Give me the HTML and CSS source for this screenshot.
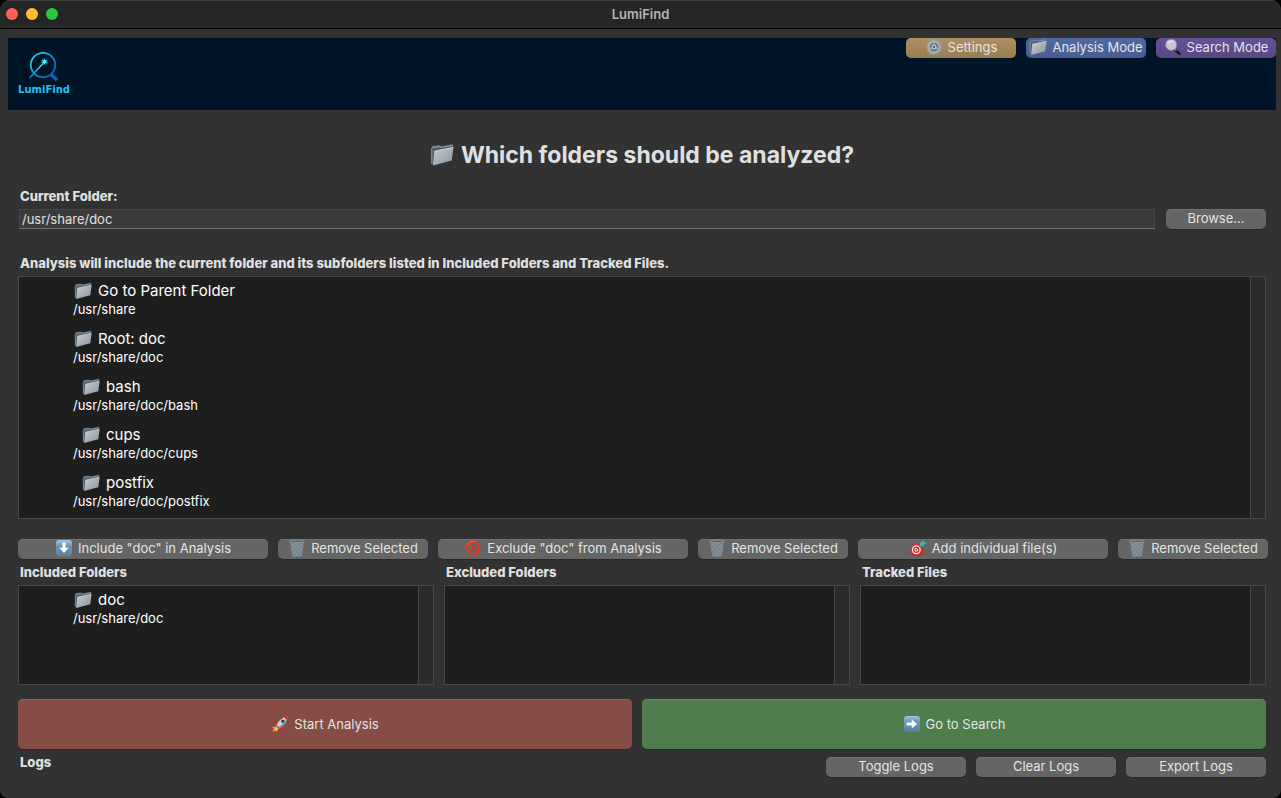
FILE: index.html
```html
<!DOCTYPE html>
<html lang="en">
<head>
<meta charset="utf-8">
<meta name="viewport" content="width=device-width, initial-scale=1">
<title>LumiFind</title>
<link rel="stylesheet" href="styles.css">
</head>
<body>
<svg class="sprite" aria-hidden="true">
  <defs>
    <linearGradient id="silver" x1="0" y1="0" x2="1" y2="1"><stop offset="0" stop-color="#c9ced3"/><stop offset="1" stop-color="#8a9299"/></linearGradient>
    <linearGradient id="tile" x1="0" y1="0" x2="0" y2="1"><stop offset="0" stop-color="#a4c6e0"/><stop offset=".35" stop-color="#7196b8"/><stop offset="1" stop-color="#5b7fa3"/></linearGradient>
    <linearGradient id="ring" x1="0" y1="0" x2="1" y2="1"><stop offset="0.1" stop-color="#14d8f4"/><stop offset="0.55" stop-color="#0b86cc"/><stop offset="1" stop-color="#0559b4"/></linearGradient>
    <linearGradient id="wand" x1="0" y1="1" x2="1" y2="0"><stop offset="0" stop-color="#0a6cc0"/><stop offset="1" stop-color="#3ff0ff"/></linearGradient>
  </defs>
  <symbol id="folder" viewBox="0 0 18 18">
    <path d="M1 3.500 2 2l5-.6 1.200 1L16.800.8l.6 1.200L16.300 12 2 16.500 1 15.500z" fill="#4c5f6c"/>
    <path d="M1.500 3.300 7.500 2.600l1 .6 8.500-1.500" fill="none" stroke="#8fa3b0" stroke-width=".8"/>
    <path d="M1.300 4v11.500" stroke="#8796a0" stroke-width=".8"/>
    <path d="M3.200 6.200 17.600 3.200 16.300 13.200 2.200 16.900z" fill="url(#silver)"/>
    <path d="M3.200 6.200 17.600 3.200" stroke="#dce2e6" stroke-width=".6" fill="none"/>
  </symbol>
  <symbol id="gear" viewBox="0 0 18 18">
    <circle cx="9" cy="9" r="7.400" fill="none" stroke="#93a1ab" stroke-width="2" stroke-dasharray="1.500 1.400"/>
    <circle cx="9" cy="9" r="5.500" fill="none" stroke="#a5b1b9" stroke-width="2.400"/>
    <circle cx="9" cy="9" r="4.200" fill="#64727c"/>
    <path d="M9 9V4.800M9 9l4 1.800M9 9l-4 1.800" stroke="#a9b5bd" stroke-width="1.100"/>
    <circle cx="9" cy="9" r="2.500" fill="#bac4ca"/><circle cx="9" cy="9" r="1.200" fill="#53616c"/>
  </symbol>
  <symbol id="lens" viewBox="0 0 18 18">
    <path d="m11 11.500 4.500 4.300" stroke="#151515" stroke-width="2.500" stroke-linecap="round"/>
    <path d="m10.500 10.700 2 2" stroke="#888" stroke-width="1.500"/>
    <circle cx="7.200" cy="6.800" r="5.600" fill="#c9c3d6" stroke="#8e899a" stroke-width=".9"/>
    <path d="M3.500 5.700q2-3.500 6-2.200" fill="none" stroke="#e9e5f1" stroke-width="1.500"/>
  </symbol>
  <symbol id="down" viewBox="0 0 18 18">
    <rect x="1" y="1" width="16" height="16" rx="3" fill="url(#tile)"/>
    <path d="M7.400 3.600h3.200v5.200h3L9 14 4.400 8.800h3z" fill="#fff"/>
  </symbol>
  <symbol id="right" viewBox="0 0 18 18">
    <rect x="1" y="1" width="16" height="16" rx="3" fill="url(#tile)"/>
    <path d="M3.600 7.400v3.200h5.200v3L14 9 8.800 4.400v3z" fill="#fff"/>
  </symbol>
  <symbol id="bin" viewBox="0 0 18 18">
    <path d="M2 2.500h14l-2 14.200q-5 1.200-10 0z" fill="#77838b"/>
    <path d="m3 4 10.500 12M6 3l9 10M10 3l5 6M3.500 9l7 8M15 4 4.500 16M12 3l-9 9M8 3 3 8M14.500 9l-7 8" stroke="#929ca3" stroke-width=".6"/>
    <path d="M4 15.800q5 1.300 10 0l-.2 1.200q-4.800 1-9.600 0z" fill="#7391a8"/>
    <ellipse cx="9" cy="2.300" rx="7.500" ry="1.300" fill="#58646b" stroke="#9aa5ab" stroke-width=".7"/>
  </symbol>
  <symbol id="ban" viewBox="0 0 18 18">
    <path d="m4.500 4.500 9 9" stroke="#dc3a20" stroke-width="2.100"/>
    <circle cx="9" cy="9" r="6.300" fill="none" stroke="#e03a1f" stroke-width="2"/>
    <path d="M3.300 6Q6 1.500 11 2.400" fill="none" stroke="#f5745a" stroke-width=".8"/>
  </symbol>
  <symbol id="target" viewBox="0 0 18 18">
    <ellipse cx="8" cy="11.500" rx="6.200" ry="5.800" fill="#b71c1c"/>
    <circle cx="7.300" cy="10.700" r="6.100" fill="#db2f28"/>
    <circle cx="7.300" cy="10.700" r="4.500" fill="#eee"/>
    <circle cx="7.300" cy="10.700" r="3.200" fill="#db2f28"/>
    <circle cx="7.300" cy="10.700" r="1.900" fill="#eee"/>
    <circle cx="7.300" cy="10.700" r=".9" fill="#c52020"/>
    <path d="M7.300 10.700 12.500 5.800" stroke="#555e63" stroke-width="1"/>
    <path d="m10.500 7.700.6-3.600L15 1l.2 2.200 2.300.2-3 3.600z" fill="#38b3c1"/>
  </symbol>
  <symbol id="rocket" viewBox="0 0 18 18">
    <path d="m5.500 11-4.800 1.700 2.200.7L1.200 17l4-1.200.6 1.600 2-4z" fill="#fb9a15"/>
    <path d="m5.800 11.700-3 3.500 3.500-1.200z" fill="#ffe34c"/>
    <path d="m8 5.800-4 1.100-2.600 3.800 4.300-.6zM12.600 10.200l-1.200 4-3.800 2.700.5-4.400z" fill="#dc2c18"/>
    <path d="M5 11.500Q8 3.200 17 1q-1.500 9.200-9.600 12.700z" fill="#c5d2db"/>
    <path d="M6.500 12.800Q13 9.500 16.800 2q-1.400 8.200-9.400 11.700z" fill="#6f8ba0"/>
    <path d="M13 2.600Q15 1.300 17 1q-.3 2.200-1.300 4z" fill="#d8291b"/>
    <path d="m5 11.500 2.400 2.200 1.300-.7-2.900-3z" fill="#2689cf"/>
    <circle cx="11.900" cy="6.200" r="2" fill="#32383e" stroke="#eee" stroke-width=".5"/>
  </symbol>
</svg>

<div class="window">
  <header class="titlebar">
    <div class="lights"><span class="light close"></span><span class="light minimize"></span><span class="light maximize"></span></div>
    <div class="window-title">LumiFind</div>
  </header>

  <div class="banner">
    <div class="logo">
      <svg class="logo-mark" viewBox="0 0 32 30" aria-hidden="true">
        <circle cx="15" cy="13" r="12.200" fill="none" stroke="url(#ring)" stroke-width="1.800"/>
        <path d="m23 22.500 6 5.500" stroke="#0863bc" stroke-width="3.400"/>
        <path d="M1.500 26 16.500 10" stroke="url(#wand)" stroke-width="1.700"/>
        <circle cx="16.500" cy="9.500" r="3.500" fill="#087caa" opacity=".5"/>
        <path d="m16.500 6.500.7 1.900 2.100-.6-1.100 1.800 1.100 1.700-1.900-.5-.9 1.900-.7-1.900-2.100.6 1.200-1.800-1.200-1.600 2.100.4z" fill="#4ff7ff"/>
      </svg>
      <span class="logo-name">LumiFind</span>
    </div>
    <nav class="modes">
      <button class="btn settings"><svg class="icon"><use href="#gear"/></svg>Settings</button>
      <button class="btn analysis"><svg class="icon"><use href="#folder"/></svg>Analysis Mode</button>
      <button class="btn search"><svg class="icon"><use href="#lens"/></svg>Search Mode</button>
    </nav>
  </div>

  <main class="content">
    <h1 class="heading"><svg class="heading-icon"><use href="#folder"/></svg>Which folders should be analyzed?</h1>

    <label class="caption" for="path">Current Folder:</label>
    <div class="path-row">
      <input class="path" id="path" type="text" value="/usr/share/doc">
      <button class="btn browse">Browse...</button>
    </div>

    <h2 class="caption">Analysis will include the current folder and its subfolders listed in Included Folders and Tracked Files.</h2>
    <div class="list tree">
      <ul class="items">
        <li class="item"><span class="name"><svg class="icon"><use href="#folder"/></svg>Go to Parent Folder</span><span class="location">/usr/share</span></li>
        <li class="item"><span class="name"><svg class="icon"><use href="#folder"/></svg>Root: doc</span><span class="location">/usr/share/doc</span></li>
        <li class="item"><span class="name child"><svg class="icon"><use href="#folder"/></svg>bash</span><span class="location">/usr/share/doc/bash</span></li>
        <li class="item"><span class="name child"><svg class="icon"><use href="#folder"/></svg>cups</span><span class="location">/usr/share/doc/cups</span></li>
        <li class="item"><span class="name child"><svg class="icon"><use href="#folder"/></svg>postfix</span><span class="location">/usr/share/doc/postfix</span></li>
      </ul>
      <div class="track"></div>
    </div>

    <div class="actions">
      <button class="btn"><svg class="icon"><use href="#down"/></svg>Include "doc" in Analysis</button>
      <button class="btn"><svg class="icon"><use href="#bin"/></svg>Remove Selected</button>
      <button class="btn"><svg class="icon"><use href="#ban"/></svg>Exclude "doc" from Analysis</button>
      <button class="btn"><svg class="icon"><use href="#bin"/></svg>Remove Selected</button>
      <button class="btn"><svg class="icon"><use href="#target"/></svg>Add individual file(s)</button>
      <button class="btn"><svg class="icon"><use href="#bin"/></svg>Remove Selected</button>
    </div>

    <div class="selections">
      <section class="selection">
        <h2 class="caption">Included Folders</h2>
        <div class="list">
          <ul class="items">
            <li class="item"><span class="name"><svg class="icon"><use href="#folder"/></svg>doc</span><span class="location">/usr/share/doc</span></li>
          </ul>
          <div class="track"></div>
        </div>
      </section>
      <section class="selection">
        <h2 class="caption">Excluded Folders</h2>
        <div class="list"><ul class="items"></ul><div class="track"></div></div>
      </section>
      <section class="selection">
        <h2 class="caption">Tracked Files</h2>
        <div class="list"><ul class="items"></ul><div class="track"></div></div>
      </section>
    </div>

    <div class="primary">
      <button class="btn start"><svg class="icon"><use href="#rocket"/></svg>Start Analysis</button>
      <button class="btn go"><svg class="icon"><use href="#right"/></svg>Go to Search</button>
    </div>

    <footer class="logs">
      <h2 class="caption">Logs</h2>
      <div class="log-buttons">
        <button class="btn">Toggle Logs</button>
        <button class="btn">Clear Logs</button>
        <button class="btn">Export Logs</button>
      </div>
    </footer>
  </main>
</div>
</body>
</html>
```
FILE: styles.css
```css
* { box-sizing: border-box; }

body {
  margin: 0;
  background: #000;
  color: #e0e0e0;
  font: 13px/20px Inter, "Liberation Sans", sans-serif;
}

h1, h2, ul { margin: 0; padding: 0; }

.sprite { position: absolute; width: 0; height: 0; }

.window {
  display: flex;
  flex-direction: column;
  min-height: 100vh;
  background: #323232;
  border-radius: 10px 10px 8px 8px;
  overflow: hidden;
}

.titlebar {
  display: grid;
  grid-template-columns: 1fr auto 1fr;
  align-items: center;
  height: 29px;
  padding: 0 6px 2px;
  background: #262626;
  border-top: 1px solid #414141;
  border-bottom: 1px solid #000;
}
.lights { display: flex; gap: 8px; }
.light { width: 12px; height: 12px; border-radius: 50%; }
.close { background: #ff5f57; }
.minimize { background: #febc2e; }
.maximize { background: #28c840; }
.window-title { color: #b4b4b4; font-weight: 600; }

.banner {
  display: flex;
  justify-content: space-between;
  align-items: flex-start;
  height: 72px;
  margin: 9px 5px 0 8px;
  background: #001427;
}
.logo {
  display: flex;
  flex-direction: column;
  align-items: center;
  width: 72px;
  padding-top: 14px;
}
.logo-mark { width: 32px; height: 30px; }
.logo-name {
  color: #19c5f0;
  font: bold 10px/16px "DejaVu Sans", sans-serif;
}
.modes { display: flex; gap: 10px; }

.btn {
  display: flex;
  align-items: center;
  justify-content: center;
  gap: 5px;
  height: 20px;
  min-width: 0;
  padding: 0 0 2px;
  border: 0;
  border-radius: 5px;
  background: #656565;
  box-shadow: inset 0 1px #707070, 0 1px 1px #272727;
  color: #e4e4e4;
  font: inherit;
  white-space: nowrap;
}
.icon { flex: none; width: 18px; height: 18px; }
.modes .btn { width: 120px; box-shadow: none; }
.modes .settings { width: 110px; background: linear-gradient(#ad9061, #987d50); }
.modes .analysis { background: linear-gradient(#516aa5, #475c91); }
.modes .search { background: linear-gradient(#66529a, #594683); }

.content {
  display: flex;
  flex: 1;
  flex-direction: column;
  padding: 29px 15px 16px 18px;
}
.heading {
  display: flex;
  align-items: center;
  justify-content: center;
  gap: 7px;
  margin-bottom: 16px;
  font-size: 23px;
  line-height: 32px;
  font-weight: 700;
}
.heading-icon { width: 24px; height: 24px; }
.caption {
  padding-left: 2px;
  font-size: 13px;
  line-height: 18px;
  font-weight: 800;
}

.path-row { display: flex; gap: 11px; margin: 4px 0 25px; }
.path {
  flex: 1;
  min-width: 0;
  height: 20px;
  margin-left: 1px;
  padding: 0 2px;
  border: 1px solid #484848;
  border-bottom-color: #727272;
  background: #3b3b3b;
  color: #e0e0e0;
  font: inherit;
}
.browse { width: 100px; }

.list {
  display: flex;
  height: 100px;
  border: 1px solid #484848;
  background: #1e1e1e;
}
.tree { flex: 1 0 auto; margin: 4px 0 20px; }
.items { flex: 1; list-style: none; }
.track { width: 15px; border-left: 1px solid #484848; background: #2b2b2b; }
.item {
  display: flex;
  flex-direction: column;
  height: 48px;
  padding: 4px 0 0 54px;
  color: #fff;
}
.name {
  display: flex;
  align-items: center;
  gap: 6px;
  padding-left: 1px;
  font-size: 15px;
  line-height: 20px;
}
.name .icon { margin-top: -1px; }
.child { padding-left: 9px; }
.location { line-height: 16px; }

.actions {
  display: grid;
  grid-template-columns: 5fr 3fr 5fr 3fr 5fr 3fr;
  gap: 10px;
  margin-right: -2px;
}
.selections {
  display: grid;
  grid-template-columns: 416fr 406fr 406fr;
  gap: 10px;
  margin: 4px 0 14px;
}
.selection .caption { margin-bottom: 4px; }

.primary { display: grid; grid-template-columns: 614fr 624fr; gap: 10px; }
.primary .btn { height: 50px; padding: 0; }
.primary .start { background: #864d46; box-shadow: inset 0 1px #965f58, 0 1px 1px #272727; }
.primary .go { background: #4f7d4c; box-shadow: inset 0 1px #628c5f, 0 1px 1px #272727; }

.logs {
  display: flex;
  justify-content: space-between;
  align-items: flex-start;
  padding: 4px 0;
  border-bottom: 1px solid #2e2e2e;
}
.log-buttons { display: flex; gap: 10px; padding-top: 4px; }
.log-buttons .btn { width: 140px; }
```
